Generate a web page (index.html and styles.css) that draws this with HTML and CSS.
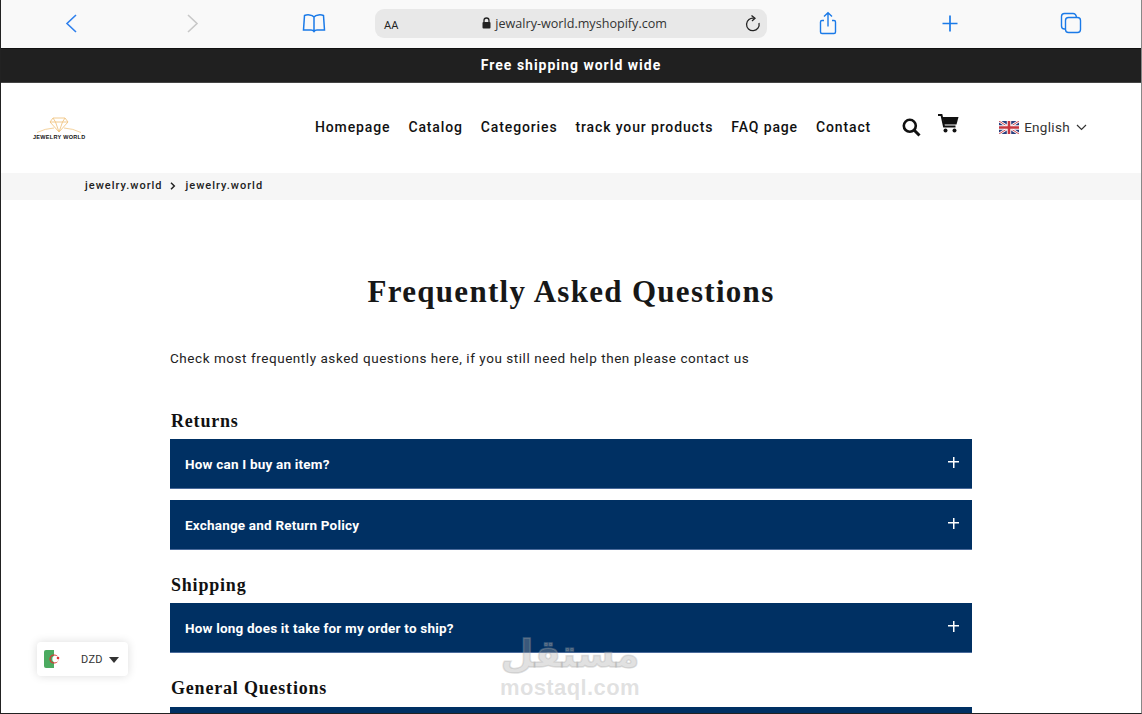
FILE: index.html
```html
<!DOCTYPE html>
<html lang="en">
<head>
    <meta charset="UTF-8">
    <meta name="viewport" content="width=device-width, initial-scale=1.0">
    <title>Frequently Asked Questions</title>
    <link rel="stylesheet" href="styles.css">
</head>
<body>
<div class="frame">
    <!-- Safari toolbar -->
    <div class="browser-bar">
        <svg class="tool tool-back" width="24" height="24" viewBox="0 0 24 24"><path d="M16 4 L7 12.500 L16 21" fill="none" stroke="#2f80ed" stroke-width="1.600"/></svg>
        <svg class="tool tool-forward" width="24" height="24" viewBox="0 0 24 24"><path d="M8 4 L17 12.500 L8 21" fill="none" stroke="#c8c8c8" stroke-width="1.600"/></svg>
        <svg class="tool tool-book" width="24" height="24" viewBox="0 0 24 24"><path d="M12 6 C10 3.500 5 3.500 2.500 4.500 L1.500 19 L9 19 Q11 19 12 20.500 Q13 19 15 19 L22.500 19 L21.500 4.500 C19 3.500 14 3.500 12 6 Z M12 6 V20" fill="none" stroke="#1a7ae8" stroke-width="1.500"/></svg>
        <div class="address">
            <span class="aa">AA</span>
            <span class="url">
                <svg width="9" height="12" viewBox="0 0 9 12"><path d="M2 5.500 V3.500 a2.500 2.500 0 0 1 5 0 V5.500" fill="none" stroke="#222" stroke-width="1.300"/><rect x="0.500" y="5" width="8" height="6.500" rx="1" fill="#222"/></svg>
                jewalry-world.myshopify.com
            </span>
            <svg class="reload" width="18" height="18" viewBox="0 0 18 18"><path d="M10 3.200 A6.300 6.300 0 1 0 15 8" fill="none" stroke="#222" stroke-width="1.300"/><path d="M7.500 0.500 L11 3.300 L8 6" fill="none" stroke="#222" stroke-width="1.300"/></svg>
        </div>
        <svg class="tool tool-share" width="24" height="24" viewBox="0 0 24 24"><path d="M8 9.500 H6 Q4.500 9.500 4.500 11 V21 Q4.500 22.500 6 22.500 H18 Q19.500 22.500 19.500 21 V11 Q19.500 9.500 18 9.500 H16 M12 15.500 V2 M8 5.500 L12 1.800 L16 5.500" fill="none" stroke="#1a7ae8" stroke-width="1.400"/></svg>
        <svg class="tool tool-plus" width="24" height="24" viewBox="0 0 24 24"><path d="M12 4.500 V20.500 M4.500 12.500 H19.500" fill="none" stroke="#1a7ae8" stroke-width="1.700"/></svg>
        <svg class="tool tool-tabs" width="24" height="24" viewBox="0 0 24 24"><rect x="6.500" y="6.500" width="15" height="15" rx="3" fill="none" stroke="#1a7ae8" stroke-width="1.400"/><path d="M6.500 18 H5.500 Q2.500 18 2.500 15 V5.500 Q2.500 2.500 5.500 2.500 H14 Q17 2.500 17.500 6.500" fill="none" stroke="#1a7ae8" stroke-width="1.400"/></svg>
    </div>

    <div class="announcement">Free shipping world wide</div>

    <header class="site-header">
        <div class="logo">
            <svg width="52" height="17" viewBox="0 0 52 17"><path d="M20 1 H32 L35 5 L26 15 L17 5 Z M17 5 H35 M22.500 5 L26 15 L29.500 5 M22.500 5 L20 1 M29.500 5 L32 1" fill="none" stroke="#f0c583" stroke-width="0.900"/><path d="M4 15.500 Q12 11.500 21 11 M48 15.500 Q40 11.500 31 11" fill="none" stroke="#f0c583" stroke-width="0.800"/></svg>
            <span class="logo-text">JEWELRY WORLD</span>
        </div>
        <nav class="main-nav">
            <a>Homepage</a>
            <a>Catalog</a>
            <a>Categories</a>
            <a>track your products</a>
            <a>FAQ page</a>
            <a>Contact</a>
        </nav>
        <div class="header-icons">
            <svg width="19" height="19" viewBox="0 0 19 19"><circle cx="7.800" cy="7.800" r="6" fill="none" stroke="#111" stroke-width="2.600"/><path d="M12 12 L17.500 17.500" stroke="#111" stroke-width="3"/></svg>
            <svg class="cart" width="21" height="19" viewBox="0 0 21 19"><path d="M0 1 H3.500 L6 12.500 H17.500" fill="none" stroke="#111" stroke-width="2"/><path d="M4.500 3 H20.500 L18.500 10.500 H6 Z" fill="#111"/><circle cx="7.500" cy="16.500" r="2" fill="#111"/><circle cx="16.500" cy="16.500" r="2" fill="#111"/></svg>
        </div>
        <div class="lang">
            <svg width="20" height="13" viewBox="0 0 20 13"><rect width="20" height="13" fill="#2a3f7e"/><path d="M0 0 L20 13 M20 0 L0 13" stroke="#fff" stroke-width="2.600"/><path d="M0 0 L20 13 M20 0 L0 13" stroke="#c8373f" stroke-width="0.900"/><path d="M10 0 V13 M0 6.500 H20" stroke="#fff" stroke-width="4.400"/><path d="M10 0 V13 M0 6.500 H20" stroke="#c8373f" stroke-width="2.600"/></svg>
            <span>English</span>
            <svg width="11" height="7" viewBox="0 0 11 7"><path d="M1 1 L5.500 5.500 L10 1" fill="none" stroke="#333" stroke-width="1.200"/></svg>
        </div>
    </header>

    <div class="breadcrumb">
        <span>jewelry.world</span>
        <svg width="6" height="8" viewBox="0 0 6 8"><path d="M1 0.800 L4.300 4 L1 7.200" fill="none" stroke="#222" stroke-width="1.500"/></svg>
        <span>jewelry.world</span>
    </div>

    <main class="faq">
        <h1>Frequently Asked Questions</h1>
        <p class="intro">Check most frequently asked questions here, if you still need help then please contact us</p>

        <h2>Returns</h2>
        <div class="question"><span>How can I buy an item?</span><span class="plus"></span></div>
        <div class="question"><span>Exchange and Return Policy</span><span class="plus"></span></div>

        <h2>Shipping</h2>
        <div class="question"><span>How long does it take for my order to ship?</span><span class="plus"></span></div>

        <h2 class="last-group">General Questions</h2>
        <div class="question"></div>
    </main>

    <!-- Currency picker -->
    <div class="currency">
        <svg width="19" height="18" viewBox="0 0 19 18"><rect width="19" height="18" rx="2" fill="#fff"/><path d="M2 0 H10 V18 H2 Q0 18 0 16 V2 Q0 0 2 0 Z" fill="#4caa60"/><circle cx="10" cy="9" r="4" fill="none" stroke="#d33" stroke-width="1.200"/><circle cx="11.500" cy="9" r="3.200" fill="#fff"/><circle cx="14" cy="8" r="1.300" fill="#d33"/></svg>
        <span>DZD</span>
        <span class="caret"></span>
    </div>

    <!-- Watermark -->
    <div class="watermark">
        <span class="wm-arabic" dir="rtl">مستقل</span>
        <span class="wm-latin">mostaql.com</span>
    </div>
</div>
</body>
</html>
```

FILE: styles.css
```css
* {
    box-sizing: border-box;
}

html, body {
    margin: 0;
    padding: 0;
    background: #fff;
}

.frame {
    position: relative;
    width: 1142px;
    height: 714px;
    overflow: hidden;
    border-left: 1px solid #222;
    border-right: 1px solid #888;
    border-bottom: 1px solid #222;
    font-family: Roboto, "Liberation Sans", sans-serif;
    color: #111;
}

/* Barra del navegador */
.browser-bar {
    position: relative;
    height: 49px;
    background: #f9f9f9;
    border-bottom: 1px solid #111;
}

.tool {
    position: absolute;
    top: 11px;
}

.tool-back { left: 59px; }
.tool-forward { left: 179px; }
.tool-book { left: 301px; }
.tool-share { left: 815px; }
.tool-plus { left: 937px; }
.tool-tabs { left: 1058px; }

.address {
    position: absolute;
    left: 374px;
    top: 9px;
    width: 392px;
    height: 29px;
    display: flex;
    align-items: center;
    padding: 0 4px 0 9px;
    background: #e8e8e8;
    border-radius: 9px;
}

.aa {
    font-size: 11px;
    color: #222;
    margin-top: 4px;
}

.url {
    flex: 1;
    display: flex;
    align-items: center;
    justify-content: center;
    gap: 4px;
    font-family: "Open Sans", sans-serif;
    font-size: 12.600px;
    color: #333;
    padding-left: 7px;
    margin-top: -1px;
}

.reload {
    flex: none;
    margin-right: 1px;
}

.announcement {
    height: 34px;
    background: #202020;
    border-bottom: 1px solid #444;
    color: #fff;
    font-size: 14px;
    font-weight: 700;
    letter-spacing: 1px;
    text-align: center;
    line-height: 33px;
}

.site-header {
    height: 90px;
    display: flex;
    align-items: center;
    padding-left: 32px;
}

.logo {
    width: 282px;
    display: flex;
    flex-direction: column;
    align-items: flex-start;
}

.logo-text {
    font-family: "Liberation Sans", sans-serif;
    font-size: 5.500px;
    font-weight: 700;
    letter-spacing: 0.300px;
    line-height: 6px;
    color: #111;
    white-space: nowrap;
}

.main-nav {
    display: flex;
    gap: 18px;
    font-size: 14px;
    font-weight: 500;
    letter-spacing: 0.870px;
    white-space: nowrap;
    margin-top: -2px;
}

.header-icons {
    display: flex;
    align-items: center;
    gap: 17px;
    margin-left: 31px;
    margin-top: -2px;
}

.header-icons .cart {
    margin-top: -7px;
}

.lang {
    display: flex;
    align-items: center;
    gap: 5px;
    margin-left: 40px;
    margin-top: -2px;
    font-size: 13.500px;
    letter-spacing: 0.300px;
    color: #333;
}

.lang svg:last-child {
    margin-left: 1px;
}

.breadcrumb {
    height: 27px;
    display: flex;
    align-items: center;
    gap: 7px;
    padding-left: 84px;
    padding-bottom: 2px;
    background: #f6f6f6;
    font-size: 11px;
    font-weight: 500;
    letter-spacing: 1px;
    color: #222;
}

.breadcrumb svg {
    margin-right: 3px;
}

/* Preguntas */
.faq {
    width: 802px;
    margin-left: 169px;
}

.faq h1 {
    margin: 73px 0 0;
    font-family: "Liberation Serif", serif;
    font-size: 31px;
    font-weight: 700;
    letter-spacing: 1.300px;
    line-height: 38px;
    text-align: center;
    color: #171717;
}

.intro {
    margin: 37px 0 0;
    font-size: 13.500px;
    letter-spacing: 0.550px;
    line-height: 20px;
    color: #222;
}

.faq h2 {
    margin: 0 0 8px;
    padding: 14px 0 0 1px;
    font-family: "Liberation Serif", serif;
    font-size: 18px;
    font-weight: 700;
    letter-spacing: 0.800px;
    line-height: 20px;
    color: #111;
}

.faq .intro + h2 {
    padding-top: 43px;
}

.faq .last-group {
    margin-bottom: 9px;
}

.question {
    height: 50px;
    display: flex;
    align-items: center;
    justify-content: space-between;
    padding: 0 13px 0 15px;
    margin-bottom: 11px;
    background: #003063;
    border-bottom: 1px solid #4a6a9a;
    color: #fff;
    font-size: 13.500px;
    font-weight: 700;
    letter-spacing: 0.200px;
}

.plus {
    position: relative;
    width: 11px;
    height: 11px;
    margin-top: -3px;
    background:
        linear-gradient(#fff, #fff) center / 100% 1.500px no-repeat,
        linear-gradient(#fff, #fff) center / 1.500px 100% no-repeat;
}

.currency {
    position: absolute;
    left: 36px;
    top: 642px;
    width: 91px;
    height: 34px;
    display: flex;
    align-items: center;
    padding: 0 7px;
    background: #fff;
    border-radius: 4px;
    box-shadow: 0 0 10px rgba(0, 0, 0, 0.14);
    font-size: 11px;
    letter-spacing: 0.300px;
    color: #333;
}

.currency span:nth-child(2) {
    margin-left: 18px;
}

.caret {
    width: 0;
    height: 0;
    margin-left: 6px;
    margin-top: 2px;
    border-left: 5.500px solid transparent;
    border-right: 5.500px solid transparent;
    border-top: 6px solid #333;
}

.watermark {
    position: absolute;
    left: 479px;
    top: 632px;
    width: 180px;
    display: flex;
    flex-direction: column;
    align-items: center;
    color: rgba(170, 170, 170, 0.35);
    font-weight: 700;
    pointer-events: none;
}

.wm-arabic {
    font-family: "DejaVu Sans", sans-serif;
    font-size: 38px;
    line-height: 44px;
    -webkit-text-stroke: 1.500px rgba(170, 170, 170, 0.35);
}

.wm-latin {
    font-family: "Liberation Sans", sans-serif;
    font-size: 22px;
    letter-spacing: 0.400px;
    line-height: 24px;
}
```
